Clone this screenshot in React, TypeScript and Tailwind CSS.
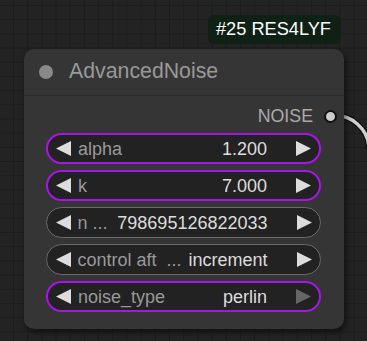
import React from "react";

type W = {
  label: string;
  value: string;
  active: boolean;
  rightDim?: boolean;
};

const widgets: W[] = [
  { label: "alpha", value: "1.200", active: true },
  { label: "k", value: "7.000", active: true },
  { label: "n ...", value: "798695126822033", active: false },
  { label: "control aft  ...", value: "increment", active: false },
  { label: "noise_type", value: "perlin", active: true, rightDim: true },
];

function Left({ color }: { color: string }) {
  return (
    <svg width="15" height="15" viewBox="0 0 15 15" className="shrink-0">
      <polygon points="15,0 15,15 0,7.5" fill={color} />
    </svg>
  );
}
function Right({ color }: { color: string }) {
  return (
    <svg width="15" height="15" viewBox="0 0 15 15" className="shrink-0">
      <polygon points="0,0 0,15 15,7.5" fill={color} />
    </svg>
  );
}

function Widget({ w }: { w: W }) {
  return (
    <div
      className={
        w.active
          ? "flex items-center w-[275px] h-[31px] rounded-full bg-[#222222] border-2 border-[#aa14e8] pl-[8px] pr-[8px]"
          : "flex items-center w-[275px] h-[31px] rounded-full bg-[#222222] border-[1.5px] border-[#6b6b6b] pl-[8.5px] pr-[8.5px]"
      }
    >
      <Left color="#dddddd" />
      <span className="ml-[7px] flex-1 whitespace-pre text-[#999999] leading-none">{w.label}</span>
      <span className="text-[#dddddd] leading-none whitespace-pre">{w.value}</span>
      <span className="ml-[29px]">
        <Right color={w.rightDim ? "#666666" : "#dddddd"} />
      </span>
    </div>
  );
}

export default function App() {
  return (
    <div
      className="relative w-[367px] h-[341px] overflow-hidden bg-[#232323] bg-[linear-gradient(to_right,#1c1c1c_1px,transparent_1px),linear-gradient(to_bottom,#1c1c1c_1px,transparent_1px)] bg-size-[14.2px_14.2px] bg-position-[13px_5px]"
      style={{ fontFamily: '"Liberation Sans", Arial, sans-serif' }}
    >
      <svg className="absolute inset-0" width="367" height="341" viewBox="0 0 367 341">
        <path d="M330 116 A 34 34 0 0 1 369 150" fill="none" stroke="#111111" strokeWidth="6" />
        <path d="M330 116 A 34 34 0 0 1 369 150" fill="none" stroke="#cfcfcf" strokeWidth="3.5" />
      </svg>
      <div className="relative flex flex-col items-start pt-[15px] pl-[24px]">
        <div className="self-start ml-[184px] w-[133px] h-[29px] rounded-[6px] bg-[#0f2014] flex items-center pl-[8px] text-white text-[18.2px] leading-none">
          #25 RES4LYF
        </div>
        <div className="mt-[5px] w-[320px] h-[280px] rounded-[10px] bg-[#353535] shadow-[2px_3px_6px_rgba(0,0,0,0.55)]">
          <div className="h-[47px] flex items-center pl-[15px] border-b border-[#2b2b2b]">
            <div className="w-[14px] h-[14px] rounded-full bg-[#8a8a8a]" />
            <span className="ml-[16px] text-[21.3px] text-[#999999] leading-none">AdvancedNoise</span>
          </div>
          <div className="mt-[5px] h-[31px] flex justify-end items-center pr-[7px]">
            <span className="text-[17.8px] text-[#aaaaaa] leading-none">NOISE</span>
            <div className="ml-[11px] w-[13px] h-[13px] rounded-full bg-[#cccccc] border-2 border-[#111111] relative z-10" />
          </div>
          <div className="mt-[1px] pl-[22px] flex flex-col gap-[6px] text-[18px]">
            {widgets.map((w) => (
              <Widget key={w.label} w={w} />
            ))}
          </div>
        </div>
      </div>
    </div>
  );
}
